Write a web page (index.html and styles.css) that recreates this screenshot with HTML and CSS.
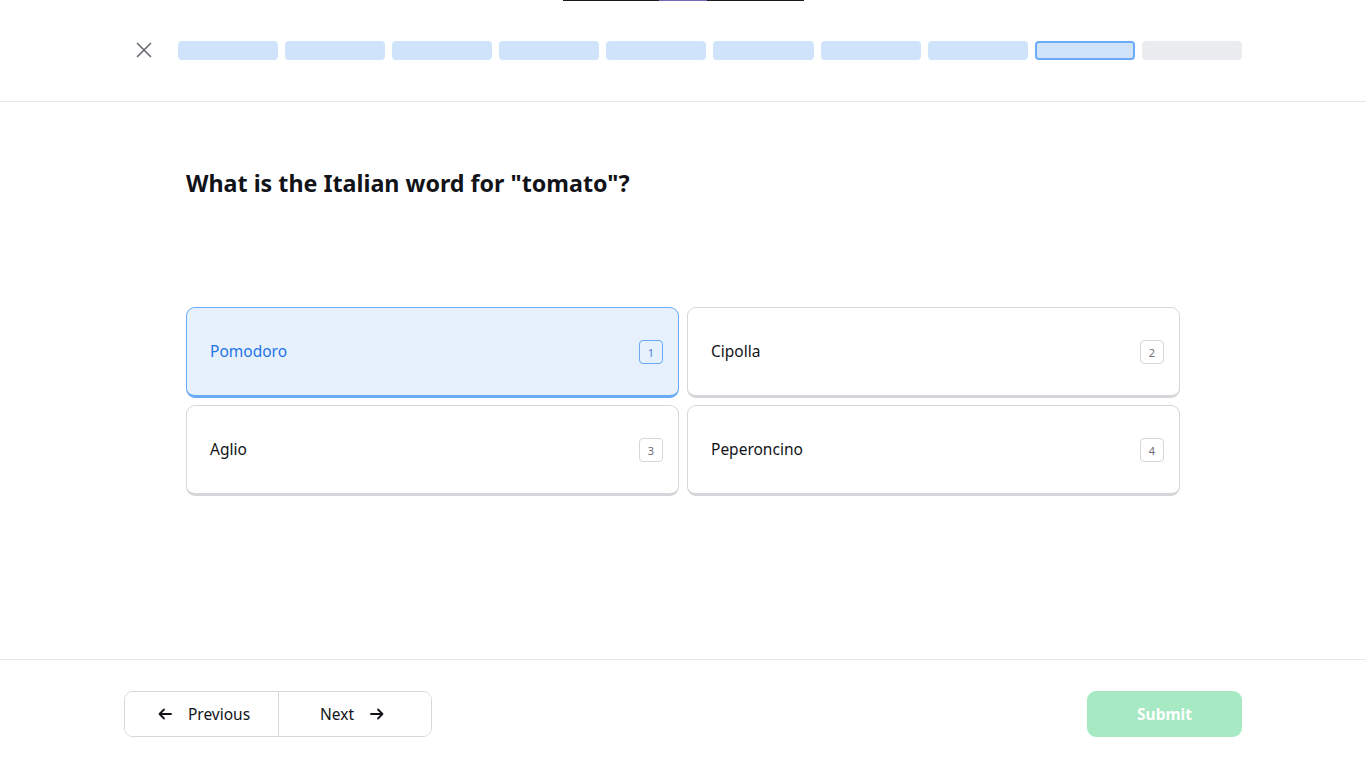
FILE: index.html
```html
<!DOCTYPE html>
<html lang="en">
<head>
<meta charset="utf-8">
<title>Quiz</title>
<link rel="stylesheet" href="styles.css">
</head>
<body>
<div class="topline"><span class="topline-mark"></span></div>
<div class="page">
  <header class="header">
    <div class="container header-inner">
      <button class="close" aria-label="Close">
        <svg width="16" height="16" viewBox="0 0 16 16" fill="none" stroke="currentColor" stroke-width="1.7" stroke-linecap="round"><path d="M1.5 1.5l13 13M14.5 1.5l-13 13"/></svg>
      </button>
      <div class="progress">
        <span class="seg done"></span>
        <span class="seg done"></span>
        <span class="seg done"></span>
        <span class="seg done"></span>
        <span class="seg done"></span>
        <span class="seg done"></span>
        <span class="seg done"></span>
        <span class="seg done"></span>
        <span class="seg current"></span>
        <span class="seg todo"></span>
      </div>
    </div>
  </header>

  <main class="main">
    <div class="quiz">
      <h1 class="question">What is the Italian word for "tomato"?</h1>
      <div class="options">
        <button class="option selected"><span class="label">Pomodoro</span><span class="key">1</span></button>
        <button class="option"><span class="label">Cipolla</span><span class="key">2</span></button>
        <button class="option"><span class="label">Aglio</span><span class="key">3</span></button>
        <button class="option"><span class="label">Peperoncino</span><span class="key">4</span></button>
      </div>
    </div>
  </main>

  <footer class="footer">
    <div class="container footer-inner">
      <div class="nav">
        <button class="nav-btn prev">
          <svg width="16" height="16" viewBox="0 0 16 16" fill="none" stroke="currentColor" stroke-width="1.8" stroke-linecap="round" stroke-linejoin="round"><path d="M14 8H2.5M7 3.5L2.5 8 7 12.5"/></svg>
          <span>Previous</span>
        </button>
        <button class="nav-btn next">
          <span>Next</span>
          <svg width="16" height="16" viewBox="0 0 16 16" fill="none" stroke="currentColor" stroke-width="1.8" stroke-linecap="round" stroke-linejoin="round"><path d="M2 8h11.5M9 3.5L13.5 8 9 12.5"/></svg>
        </button>
      </div>
      <button class="submit">Submit</button>
    </div>
  </footer>
</div>
</body>
</html>
```

FILE: styles.css
```css
* { box-sizing: border-box; }
html, body { margin: 0; padding: 0; }
body {
  font-family: "Noto Sans", "Open Sans", sans-serif;
  color: #111318;
  background: #fff;
}
button { font-family: inherit; cursor: pointer; }

.topline {
  position: absolute;
  top: 0;
  left: 563px;
  width: 241px;
  height: 1px;
  background: #1b1b1b;
}
.topline-mark {
  position: absolute;
  left: 96px;
  width: 48px;
  height: 1px;
  background: #7068b8;
}

.page {
  display: flex;
  flex-direction: column;
  height: 100vh;
}
.container {
  width: 1118px;
  margin: 0 auto;
}

.header {
  height: 102px;
  border-bottom: 1px solid #e6e6e8;
  flex: none;
}
.header-inner {
  display: flex;
  align-items: center;
  height: 100%;
  padding-bottom: 1px;
  gap: 14px;
}
.close {
  width: 40px;
  height: 40px;
  border: 0;
  background: transparent;
  color: #6b6d73;
  display: flex;
  align-items: center;
  justify-content: center;
  padding: 0;
}
.progress {
  display: grid;
  grid-template-columns: repeat(10, 1fr);
  gap: 7px;
  flex: 1;
}
.seg {
  height: 19px;
  border-radius: 4px;
}
.seg.done { background: #cfe4fb; }
.seg.current { background: #cfe4fb; border: 2px solid #6aaaf6; }
.seg.todo { background: #ebecef; }

.main {
  flex: 1;
  padding-top: 66px;
}
.quiz {
  width: 994px;
  margin: 0 auto;
}
.question {
  margin: 0 0 109px;
  font-size: 23.25px;
  line-height: 30px;
  font-weight: 700;
  color: #111318;
}
.options {
  display: grid;
  grid-template-columns: 1fr 1fr;
  gap: 7px 8px;
}
.option {
  display: flex;
  align-items: center;
  justify-content: space-between;
  height: 91px;
  padding: 0 15px 2px 23px;
  background: #fff;
  border: 1px solid #d6d6da;
  border-bottom-width: 3px;
  border-radius: 9px;
  font-size: 15.5px;
  color: #111318;
  text-align: left;
}
.option.selected {
  background: #e7f1fd;
  border-color: #6aaaf6;
  color: #1f74e6;
}
.key {
  width: 24px;
  height: 24px;
  border: 1px solid #d6d6da;
  border-radius: 4px;
  font-size: 11px;
  color: #6b6d73;
  display: flex;
  align-items: center;
  justify-content: center;
  margin-top: 3px;
}
.option.selected .key {
  border-color: #6aaaf6;
  color: #4a7fd6;
}

.footer {
  flex: none;
  height: 109px;
  border-top: 1px solid #e6e6e8;
}
.footer-inner {
  display: flex;
  justify-content: space-between;
  padding-top: 31px;
}
.nav {
  display: flex;
  border: 1px solid #d6d6da;
  border-radius: 9px;
  overflow: hidden;
}
.nav-btn {
  height: 44px;
  border: 0;
  background: #fff;
  font-size: 15.5px;
  color: #111318;
  display: flex;
  align-items: center;
  justify-content: center;
  gap: 15px;
  padding: 0;
}
.nav-btn.prev { border-right: 1px solid #d6d6da; width: 154px; padding-left: 4px; }
.nav-btn.next { width: 152px; padding-right: 5px; }
.submit {
  width: 155px;
  height: 46px;
  border: 0;
  border-radius: 9px;
  background: #a6e9c3;
  color: #fff;
  font-size: 15.5px;
  font-weight: 700;
}
```
